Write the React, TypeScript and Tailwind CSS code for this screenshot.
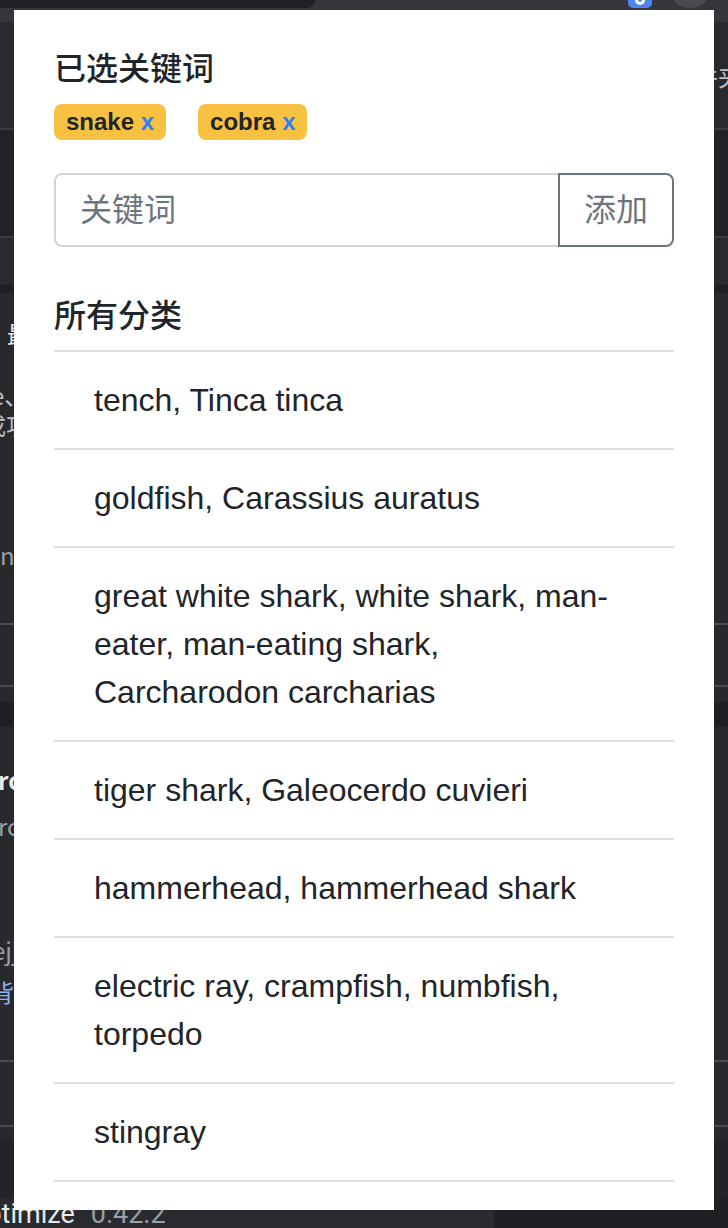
import React from 'react';

const keywords = ['snake', 'cobra'];

const classes = [
  'tench, Tinca tinca',
  'goldfish, Carassius auratus',
  'great white shark, white shark, man-eater, man-eating shark, Carcharodon carcharias',
  'tiger shark, Galeocerdo cuvieri',
  'hammerhead, hammerhead shark',
  'electric ray, crampfish, numbfish, torpedo',
  'stingray',
  'cock',
  'hen',
];

function KeywordPanel() {
  return (
    <div className="absolute left-[14px] top-[10px] h-[1200px] w-[700px] overflow-hidden bg-white px-[40px] pt-[40px] font-['Liberation_Sans','Noto_Sans_CJK_SC',sans-serif] text-[#212529]">
      <h6 className="mb-[16px] text-[32px] font-medium leading-[38px]">已选关键词</h6>
      <div className="flex gap-[32px]">
        {keywords.map((k) => (
          <span
            key={k}
            className="rounded-[8px] bg-[#f7c242] px-[12px] py-[6px] text-[24px] font-bold leading-[24px]"
          >
            {k} <span className="text-[#2f7df6]">x</span>
          </span>
        ))}
      </div>

      <div className="mt-[33px] flex h-[74px]">
        <input
          placeholder="关键词"
          className="min-w-0 flex-1 rounded-l-[8px] border-2 border-r-0 border-[#ced4da] px-[24px] text-[32px] text-[#495057] outline-none placeholder:text-[#6c757d]"
        />
        <button className="rounded-r-[8px] border-2 border-[#6c757d] px-[24px] text-[32px] text-[#6c757d]">
          添加
        </button>
      </div>

      <h6 className="mb-[15px] mt-[50px] text-[32px] font-medium leading-[38px]">所有分类</h6>
      <ul className="border-t-2 border-[#dfdfdf]">
        {classes.map((c) => (
          <li
            key={c}
            className="border-b-2 border-[#dfdfdf] py-[24px] pl-[40px] pr-[44px] text-[32px] leading-[48px]"
          >
            {c}
          </li>
        ))}
      </ul>
    </div>
  );
}

export default function App() {
  return (
    <div className="relative h-[1228px] w-[728px] overflow-hidden bg-[#292a2d] font-['Noto_Sans_CJK_SC','Noto_Sans',sans-serif]">
      {/* browser chrome behind the popup */}
      <div className="flex h-[8px] bg-[#35363a]">
        <div className="w-[315px] rounded-br-[14px] bg-[#202124]" />
        <div className="ml-[313px] flex w-[24px] justify-center rounded-b-[5px] bg-[#4d86f0]">
          <div className="h-[5px] w-[10px] rounded-b-full border-x-[3px] border-b-[3px] border-white" />
        </div>
        <div className="-mt-[36px] ml-[16px] h-[44px] w-[44px] rounded-full bg-[#4a4b4f]" />
      </div>
      <div className="h-[14px] bg-[#35363a]" />

      {/* page content behind the popup */}
      <div className="flex h-[106px] items-start justify-end">
        <span className="-mr-[14px] mt-[36px] whitespace-nowrap text-[24px] text-[#bdc1c6]">选择文件夹</span>
      </div>
      <div className="h-[108px] border-t-2 border-[#3c3d41] bg-[#222326]" />
      <div className="h-[49px] border-t-2 border-[#3c3d41]" />
      <div className="h-[8px] bg-[#1f2023]" />
      <div className="flex h-[330px] flex-col bg-[#28292c] text-[24px] leading-[38px]">
        <p className="ml-[7px] mt-[22px] whitespace-nowrap text-[#e8eaed]">最近使用</p>
        <p className="-ml-[9px] mt-[27px] whitespace-nowrap leading-[30px] text-[#bdc1c6]">e、设置</p>
        <p className="-ml-[18px] whitespace-nowrap leading-[30px] text-[#bdc1c6]">成功</p>
        <p className="mt-[96px] whitespace-nowrap text-[#9aa0a6]">n 1.0.0</p>
      </div>
      <div className="h-[62px] border-t-2 border-[#4a4b4e] bg-[#28292c]" />
      <div className="h-[17px] border-t-2 border-[#4a4b4e] bg-[#28292c]" />
      <div className="h-[25px] bg-[#1f2023]" />
      <div className="flex h-[333px] flex-col bg-[#28292c] text-[24px] leading-[38px]">
        <p className="-ml-[2px] mt-[34px] whitespace-nowrap font-bold text-[#e8eaed]">rc</p>
        <p className="-ml-[2px] mt-[8px] whitespace-nowrap text-[#9aa0a6]">rc</p>
        <p className="-ml-[8px] mt-[86px] whitespace-nowrap text-[#9aa0a6]">ejj</p>
        <p className="-ml-[10px] mt-[4px] whitespace-nowrap text-[#8ab4f8]">背景</p>
      </div>
      <div className="h-[65px] border-t-2 border-[#4a4b4e] bg-[#28292c]" />
      <div className="h-[15px] border-t-2 border-[#4a4b4e] bg-[#28292c]" />
      <div className="h-[58px] bg-[#232427]" />
      <div className="flex h-[30px]">
        <div className="flex w-[494px] items-end gap-[16px] bg-[#2a2b2e] font-['Roboto',sans-serif] text-[27px] leading-[28px]">
          <span className="-ml-[29px] text-[#e8eaed]">optimize</span>
          <span className="text-[#9aa0a6]">0.42.2</span>
        </div>
        <div className="flex-1 bg-[#1f2023]" />
      </div>

      <KeywordPanel />
    </div>
  );
}
